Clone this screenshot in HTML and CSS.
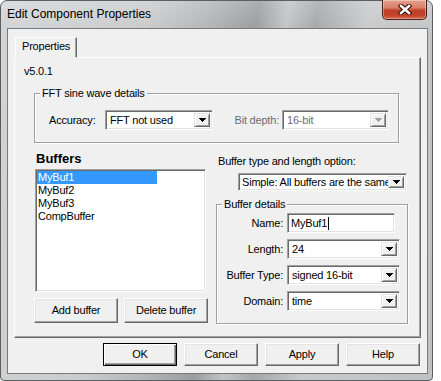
FILE: index.html
```html
<!DOCTYPE html>
<html>
<head>
<meta charset="utf-8">
<link rel="stylesheet" href="styles.css">
</head>
<body>
<div class="window">
  <div class="titlebar">
    <span class="title">Edit Component Properties</span>
    <div class="close">
      <svg width="14" height="11" viewBox="0 0 14 11"><path d="M3 2 L11 9 M11 2 L3 9" stroke="#3b0c06" stroke-width="4.6" stroke-linecap="square" fill="none"/><path d="M3 2 L11 9 M11 2 L3 9" stroke="#fff" stroke-width="2.6" stroke-linecap="square" fill="none"/></svg>
    </div>
  </div>
  <div class="client">
    <div class="tabs"><div class="tab">Properties</div></div>
    <div class="panel">
      <div class="version">v5.0.1</div>
      <fieldset class="group fft">
        <legend>FFT sine wave details</legend>
        <div class="fft-row">
          <span class="acc-lbl">Accuracy:</span>
          <div class="combo w108"><span class="val">FFT not used</span><span class="drop"><svg width="7" height="4" viewBox="0 0 7 4"><path d="M0 0h7v1h-1v1h-1v1h-1v1h-1v-1h-1v-1h-1v-1h-1z" fill="#000"/></svg></span></div>
          <span class="bit-lbl">Bit depth:</span>
          <div class="combo w107 disabled"><span class="val">16-bit</span><span class="drop"><svg width="7" height="4" viewBox="0 0 7 4"><path d="M0 0h7v1h-1v1h-1v1h-1v1h-1v-1h-1v-1h-1v-1h-1z" fill="#a0a0a0"/></svg></span></div>
        </div>
      </fieldset>
      <div class="buffers">
        <div class="left-col">
          <div class="heading">Buffers</div>
          <div class="listbox">
            <div class="item sel">MyBuf1</div>
            <div class="item">MyBuf2</div>
            <div class="item">MyBuf3</div>
            <div class="item">CompBuffer</div>
          </div>
          <div class="btn-row">
            <button class="btn small">Add buffer</button>
            <button class="btn small">Delete buffer</button>
          </div>
        </div>
        <div class="right-col">
          <div class="opt-label">Buffer type and length option:</div>
          <div class="combo opt"><span class="val">Simple: All buffers are the same</span><span class="drop"><svg width="7" height="4" viewBox="0 0 7 4"><path d="M0 0h7v1h-1v1h-1v1h-1v1h-1v-1h-1v-1h-1v-1h-1z" fill="#000"/></svg></span></div>
          <fieldset class="group details">
            <legend>Buffer details</legend>
            <div class="frow first">
              <span class="flabel">Name:</span>
              <div class="edit"><span>MyBuf1</span><span class="caret"></span></div>
            </div>
            <div class="frow">
              <span class="flabel">Length:</span>
              <div class="combo field"><span class="val">24</span><span class="drop"><svg width="7" height="4" viewBox="0 0 7 4"><path d="M0 0h7v1h-1v1h-1v1h-1v1h-1v-1h-1v-1h-1v-1h-1z" fill="#000"/></svg></span></div>
            </div>
            <div class="frow">
              <span class="flabel">Buffer Type:</span>
              <div class="combo field"><span class="val">signed 16-bit</span><span class="drop"><svg width="7" height="4" viewBox="0 0 7 4"><path d="M0 0h7v1h-1v1h-1v1h-1v1h-1v-1h-1v-1h-1v-1h-1z" fill="#000"/></svg></span></div>
            </div>
            <div class="frow">
              <span class="flabel">Domain:</span>
              <div class="combo field"><span class="val">time</span><span class="drop"><svg width="7" height="4" viewBox="0 0 7 4"><path d="M0 0h7v1h-1v1h-1v1h-1v1h-1v-1h-1v-1h-1v-1h-1z" fill="#000"/></svg></span></div>
            </div>
          </fieldset>
        </div>
      </div>
    </div>
    <div class="actions">
      <button class="btn action default">OK</button>
      <button class="btn action">Cancel</button>
      <button class="btn action">Apply</button>
      <button class="btn action">Help</button>
    </div>
  </div>
</div>
</body>
</html>
```

FILE: styles.css
```css
* { box-sizing: border-box; }
body {
  margin: 0;
  background: #ffffff;
  font-family: "Liberation Sans", Arial, sans-serif;
  font-size: 11px;
  line-height: 13px;
  letter-spacing: -0.2px;
  color: #000;
}
.window {
  width: 433px;
  height: 381px;
  display: flex;
  flex-direction: column;
  border: 1px solid #5e5e5e;
  border-radius: 7px 7px 4px 4px;
  background:
    linear-gradient(to bottom, rgba(255,255,255,0.18), rgba(255,255,255,0) 30px),
    linear-gradient(100deg, #d3d4d5 0%, #cacbcc 30%, #b4b5b6 42%, #9b9c9d 52%, #c2c3c4 58%, #a6a7a8 64%, #c8c9ca 74%, #bfc0c1 100%);
}
.titlebar {
  height: 27px;
  display: flex;
  justify-content: space-between;
  align-items: flex-start;
}
.title {
  font-size: 12px;
  line-height: 15px;
  letter-spacing: 0;
  padding: 6px 0 0 6px;
  color: #000;
}
.close {
  width: 45px;
  height: 20px;
  margin: -1px 5px 0 0;
  border: 1px solid #4a1d16;
  border-top: none;
  border-radius: 0 0 5px 5px;
  background: linear-gradient(to bottom, #e6a08e 0%, #d9806a 40%, #c0402a 55%, #c4412a 80%, #d9694e 100%);
  box-shadow: inset 0 0 0 1px rgba(255,255,255,0.35);
  display: flex;
  align-items: center;
  justify-content: center;
}
.client {
  flex: 1;
  margin: 0 4px 6px 6px;
  border: 1px solid #7a7a7a;
  background: #f0f0f0;
  display: flex;
  flex-direction: column;
  padding: 8px 0 0 6px;
}
.tabs {
  height: 20px;
  display: flex;
  align-items: flex-start;
}
.tab {
  margin-left: 1px;
  height: 21px;
  padding: 2px 6px 0 6px;
  border: 1px solid;
  border-color: #ffffff #696969 transparent #ffffff;
  box-shadow: inset -1px 0 0 #a0a0a0;
  background: #f0f0f0;
  position: relative;
  z-index: 1;
}
.panel {
  width: 407px;
  height: 281px;
  border: 1px solid;
  border-color: #ffffff #696969 #696969 #ffffff;
  box-shadow: inset -1px -1px 0 #a0a0a0;
  padding: 7px 0 0 9px;
}
.version { height: 13px; }

.group {
  margin: 0;
  padding: 0;
  min-width: 0;
  border: 1px solid #a0a0a0;
  box-shadow: inset 1px 1px 0 #ffffff, 1px 1px 0 #ffffff;
}
.group legend {
  margin-left: 5px;
  padding: 0 2px;
  line-height: 13px;
  background: #f0f0f0;
}
.fft {
  margin-top: 9px;
  margin-left: 10px;
  width: 365px;
}
.fft-row {
  display: flex;
  align-items: center;
  margin: 10px 0 12px 0;
  padding-left: 14px;
}
.acc-lbl { width: 56px; }
.bit-lbl {
  width: 69px;
  text-align: right;
  padding-right: 3px;
  color: #6d6d6d;
}

.combo {
  display: flex;
  height: 20px;
  background: #ffffff;
  border: 1px solid;
  border-color: #a0a0a0 #ffffff #ffffff #a0a0a0;
  box-shadow: inset 1px 1px 0 #696969, inset -1px -1px 0 #e3e3e3;
  padding: 2px;
}
.combo .val {
  flex: 1;
  min-width: 0;
  padding-left: 2px;
  line-height: 15px;
  white-space: nowrap;
}
.combo .drop {
  flex: none;
  width: 16px;
  height: 100%;
  background: #f0f0f0;
  border: 1px solid;
  border-color: #e3e3e3 #696969 #696969 #e3e3e3;
  box-shadow: inset 1px 1px 0 #ffffff, inset -1px -1px 0 #a0a0a0;
  display: flex;
  align-items: center;
  justify-content: center;
}
.combo .drop svg { display: block; }
.w108 { width: 108px; }
.w107 { width: 107px; }
.combo.disabled .val { color: #6d6d6d; }

.buffers {
  display: flex;
  align-items: flex-start;
}
.left-col {
  margin: 8px 0 0 10px;
  width: 174px;
}
.heading {
  font-size: 13px;
  font-weight: bold;
  line-height: 15px;
  letter-spacing: 0;
  padding-left: 2px;
}
.listbox {
  margin: 3px 0 0 1px;
  width: 171px;
  height: 123px;
  background: #ffffff;
  border: 1px solid;
  border-color: #a0a0a0 #ffffff #ffffff #a0a0a0;
  box-shadow: inset 1px 1px 0 #696969, inset -1px -1px 0 #e3e3e3;
  padding: 1px;
}
.item {
  width: 120px;
  height: 13px;
  line-height: 13px;
  padding-left: 1px;
  white-space: nowrap;
}
.item.sel {
  background: #3399ff;
  color: #ffffff;
}
.btn-row {
  display: flex;
  gap: 6px;
  margin-top: 6px;
}
.btn {
  font-family: "Liberation Sans", Arial, sans-serif;
  font-size: 11px;
  line-height: 13px;
  letter-spacing: -0.2px;
  color: #000;
  background: #f0f0f0;
  border: 1px solid;
  border-color: #ffffff #696969 #696969 #ffffff;
  box-shadow: inset -1px -1px 0 #a0a0a0, inset 1px 1px 0 #e3e3e3;
  padding: 0;
  margin: 0;
}
.btn.small {
  width: 84px;
  height: 25px;
}
.right-col {
  margin: 12px 0 0 8px;
  width: 192px;
}
.opt-label {
  padding-left: 2px;
  height: 13px;
}
.combo.opt {
  margin: 5px 0 0 22px;
  width: 169px;
  height: 18px;
}
.combo.opt .val { line-height: 13px; padding-left: 1px; }
.details {
  margin-top: 7px;
  width: 192px;
}
.frow {
  display: flex;
  align-items: center;
  height: 20px;
  margin-top: 6px;
}
.frow.first { margin-top: 2px; }
.frow:last-child { margin-bottom: 12px; }
.flabel {
  width: 66px;
  text-align: right;
  white-space: nowrap;
}
.edit, .combo.field { margin-left: 4px; }
.combo.field { width: 113px; }
.edit {
  width: 108px;
  height: 20px;
  display: flex;
  align-items: center;
  background: #ffffff;
  border: 1px solid;
  border-color: #a0a0a0 #ffffff #ffffff #a0a0a0;
  box-shadow: inset 1px 1px 0 #696969, inset -1px -1px 0 #e3e3e3;
  padding: 0 0 0 3px;
}
.caret {
  width: 1px;
  height: 13px;
  background: #000;
  margin-left: 1px;
}

.actions {
  display: flex;
  justify-content: flex-end;
  gap: 7px;
  margin: 5px 7px 0 0;
}
.btn.action {
  width: 74px;
  height: 23px;
}
.btn.default {
  border-color: #000;
  box-shadow: inset 1px 1px 0 #ffffff, inset -1px -1px 0 #696969, inset -2px -2px 0 #a0a0a0;
}
```
